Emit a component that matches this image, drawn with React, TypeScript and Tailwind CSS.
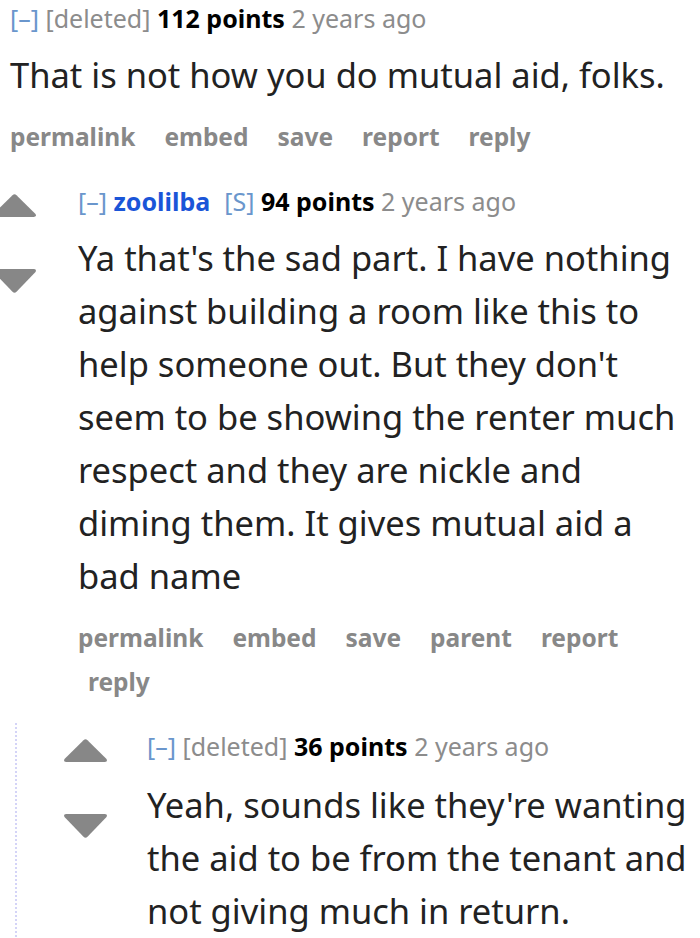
const font = { fontFamily: '"Noto Sans", "Open Sans", Arial, sans-serif' };

function Arrows() {
  return (
    <div className="flex flex-col shrink-0 w-[45px]">
      <svg width="45" height="25" viewBox="0 0 45 25">
        <path d="M20.5 2.2 Q22.5 0.5 24.5 2.2 L43.5 21 Q45 24 41.5 24 L3.5 24 Q0 24 1.5 21 Z" fill="#878787" />
      </svg>
      <svg width="45" height="26" viewBox="0 0 45 26" className="mt-[50px]">
        <path d="M20.5 23.8 Q22.5 25.5 24.5 23.8 L43.5 4 Q45 1 41.5 1 L3.5 1 Q0 1 1.5 4 Z" fill="#878787" />
      </svg>
    </div>
  );
}

function Tagline({ user, op, points }: { user?: string; op?: boolean; points: string }) {
  return (
    <div className="text-[25px] leading-[36px] text-[#8c8c8c] whitespace-nowrap">
      <span className="text-[#6a96cc]">[–]</span>{' '}
      {user ? (
        <span className="font-bold text-[#1a55d8]">{user}</span>
      ) : (
        <span>[deleted]</span>
      )}
      {op && <span className="text-[#6a96cc] ml-[14px]">[S]</span>}{' '}
      <span className="font-bold text-black">{points}</span> 2 years ago
    </div>
  );
}

function Actions({ items }: { items: string[] }) {
  return (
    <div className="flex flex-wrap gap-x-[29px] text-[24.5px] leading-[44px] font-bold text-[#888]">
      {items.map((i, n) => (
        <span key={i} className={n === items.length - 1 && items.length > 5 ? 'pl-[10px]' : ''}>
          {i}
        </span>
      ))}
    </div>
  );
}

export default function App() {
  return (
    <div className="w-[700px] h-[938px] overflow-hidden bg-white" style={font}>
      <div className="pl-[10px]">
        <Tagline points="112 points" />
        <p className="text-[34.5px] leading-[53px] text-[#222] mt-[12px]">That is not how you do mutual aid, folks.</p>
        <div className="mt-[14px]">
          <Actions items={['permalink', 'embed', 'save', 'report', 'reply']} />
        </div>
      </div>

      <div className="flex mt-[24px] -ml-[8px]">
        <div className="pt-[10px]">
          <Arrows />
        </div>
        <div className="pl-[41px] pr-[6px]">
          <Tagline user="zoolilba" op points="94 points" />
          <p className="text-[34.5px] leading-[53px] text-[#222] mt-[12px]">
            Ya that's the sad part. I have nothing against building a room like this to help someone out. But they don't seem
            to be showing the renter much respect and they are nickle and diming them. It gives mutual aid a bad name
          </p>
          <div className="mt-[14px]">
            <Actions items={['permalink', 'embed', 'save', 'parent', 'report', 'reply']} />
          </div>
        </div>
      </div>

      <div className="ml-[15px] mt-[19px] border-l-2 border-dotted border-[#d4d4f7] flex">
        <div className="pl-[46px] pt-[15px]">
          <Arrows />
        </div>
        <div className="pl-[39px] pr-[4px] pt-[5px]">
          <Tagline points="36 points" />
          <p className="text-[34.5px] leading-[53px] text-[#222] mt-[14px]">
            Yeah, sounds like they're wanting the aid to be from the tenant and not giving much in return.
          </p>
        </div>
      </div>
    </div>
  );
}
